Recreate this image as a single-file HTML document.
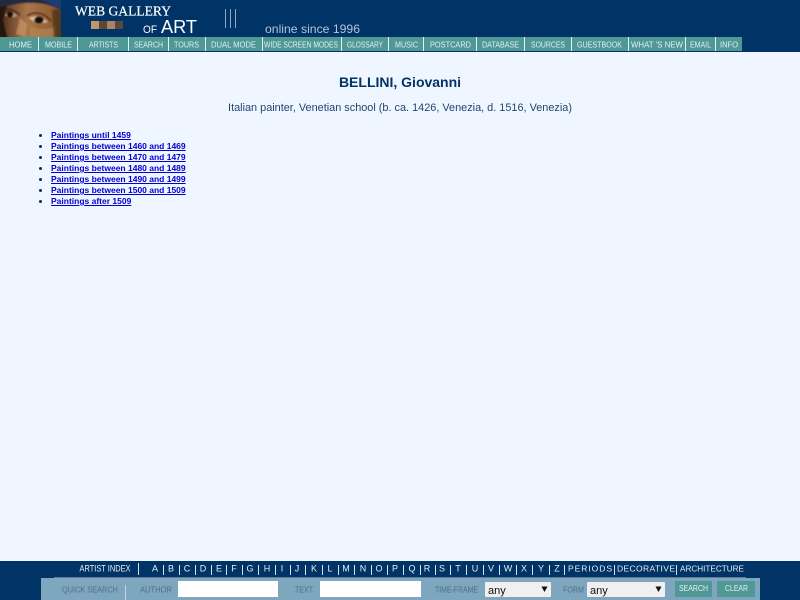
<!DOCTYPE html>
<html><head><meta charset="utf-8"><title>BELLINI, Giovanni</title>
<style>
html,body{margin:0;padding:0;width:800px;height:600px;overflow:hidden;background:#f0f6ff;font-family:"Liberation Sans",sans-serif}
svg{position:absolute;left:0;display:block}
h1{position:absolute;left:0;width:800px;top:73px;margin:0;text-align:center;font-size:14px;line-height:18px;font-weight:bold;color:#003366}
p{position:absolute;left:0;width:800px;top:101px;margin:0;text-align:center;font-size:10.9px;line-height:15px;color:#1f4670}
ul{position:absolute;left:0;top:130px;margin:0;padding:0 0 0 51px;font-size:8.5px;line-height:11px;font-weight:bold;color:#003366}
a{color:#0000d0;text-decoration:underline}
</style></head><body>
<svg style="top:0" width="800" height="52" viewBox="0 0 800 52" font-family="Liberation Sans, sans-serif">
<defs>
<linearGradient id="f" x1="0" x2="1"><stop offset="0" stop-color="#2e1b11"/><stop offset=".18" stop-color="#6f452a"/><stop offset=".45" stop-color="#a87649"/><stop offset=".8" stop-color="#935f34"/><stop offset="1" stop-color="#5c3a1e"/></linearGradient>
<filter id="b" x="0" y="0" width="100%" height="100%"><feGaussianBlur stdDeviation="0.8"/></filter>
<clipPath id="c"><rect width="61" height="37"/></clipPath>
</defs>
<rect width="800" height="52" fill="#003366"/>
<g clip-path="url(#c)"><g filter="url(#b)">
<rect x="-3" y="-3" width="67" height="43" fill="url(#f)"/>
<path d="M-3-3H64V12C54 5 40 2 26 3 14 4 6 6-3 9Z" fill="#222a40"/>
<path d="M42 0L64 11V-3H38Z" fill="#1c3a6e"/>
<path d="M-3 7L7 6 3 20 8 40H-3Z" fill="#24150e"/>
<path d="M5 15C8 11 13 11 17 16 13 18 8 18 5 15Z" fill="#b89a78"/>
<circle cx="10" cy="14.500" r="3.200" fill="#160c08"/>
<path d="M3 11C7 8 14 9 20 15" stroke="#3a2214" stroke-width="1.500" fill="none"/>
<path d="M29 18C34 15 42 16 48 22 41 24 34 23 29 18Z" fill="#d4bc9c"/>
<ellipse cx="39" cy="20" rx="4.800" ry="3.600" fill="#170d09"/>
<path d="M27 16C34 11 44 12 51 21" stroke="#46281a" stroke-width="1.500" fill="none"/>
<path d="M20 18L16 34 25 37 27 24Z" fill="#c8986c" opacity=".7"/>
<path d="M30 26C38 30 48 30 56 26V40H30Z" fill="#b98a5a" opacity=".6"/>
<path d="M52 10H64V40H54Z" fill="#4c301a" opacity=".7"/>
</g></g>
<g fill="#fff">
<text x="75" y="15.500" font-family="Liberation Serif, serif" font-size="13.500" stroke="#fff" stroke-width=".2" textLength="96" lengthAdjust="spacingAndGlyphs">WEB GALLERY</text>
<text x="143" y="33" font-size="11" textLength="14" lengthAdjust="spacingAndGlyphs">OF</text>
<text x="161" y="33" font-size="18.500" textLength="36" lengthAdjust="spacingAndGlyphs">ART</text>
</g>
<rect x="91" y="21" width="8" height="8" fill="#c49468"/><rect x="99" y="21" width="8" height="8" fill="#5c4638"/><rect x="107" y="21" width="8" height="8" fill="#a88468"/><rect x="115" y="21" width="8" height="8" fill="#5c4638"/>
<g fill="#8fa8c4"><rect x="225" y="9" width="1" height="19"/><rect x="230" y="9" width="1" height="19"/><rect x="235" y="9" width="1" height="19"/></g>
<text x="265" y="33" font-size="12" fill="#b4c6d8" textLength="95" lengthAdjust="spacingAndGlyphs">online since 1996</text>
<rect y="37" width="742" height="14" fill="#4f9896"/>
<g fill="#e4f2f2"><rect x="38" y="37" width="1" height="14"/><rect x="77" y="37" width="1" height="14"/><rect x="128" y="37" width="1" height="14"/><rect x="168" y="37" width="1" height="14"/><rect x="205" y="37" width="1" height="14"/><rect x="262" y="37" width="1" height="14"/><rect x="341" y="37" width="1" height="14"/><rect x="388" y="37" width="1" height="14"/><rect x="423" y="37" width="1" height="14"/><rect x="476" y="37" width="1" height="14"/><rect x="524" y="37" width="1" height="14"/><rect x="571" y="37" width="1" height="14"/><rect x="628" y="37" width="1" height="14"/><rect x="685" y="37" width="1" height="14"/><rect x="715" y="37" width="1" height="14"/></g>
<g fill="#e4f1f1" font-size="8">
<text x="9" y="47.300" textLength="23" lengthAdjust="spacingAndGlyphs">HOME</text>
<text x="45" y="47.300" textLength="27" lengthAdjust="spacingAndGlyphs">MOBILE</text>
<text x="89" y="47.300" textLength="29" lengthAdjust="spacingAndGlyphs">ARTISTS</text>
<text x="134" y="47.300" textLength="29" lengthAdjust="spacingAndGlyphs">SEARCH</text>
<text x="174" y="47.300" textLength="25" lengthAdjust="spacingAndGlyphs">TOURS</text>
<text x="211" y="47.300" textLength="45" lengthAdjust="spacingAndGlyphs">DUAL MODE</text>
<text x="264" y="47.300" textLength="74" lengthAdjust="spacingAndGlyphs">WIDE SCREEN MODES</text>
<text x="347" y="47.300" textLength="36" lengthAdjust="spacingAndGlyphs">GLOSSARY</text>
<text x="395" y="47.300" textLength="23" lengthAdjust="spacingAndGlyphs">MUSIC</text>
<text x="430" y="47.300" textLength="41" lengthAdjust="spacingAndGlyphs">POSTCARD</text>
<text x="482" y="47.300" textLength="37" lengthAdjust="spacingAndGlyphs">DATABASE</text>
<text x="531" y="47.300" textLength="34" lengthAdjust="spacingAndGlyphs">SOURCES</text>
<text x="577" y="47.300" textLength="45" lengthAdjust="spacingAndGlyphs">GUESTBOOK</text>
<text x="631" y="47.300" textLength="52" lengthAdjust="spacingAndGlyphs">WHAT 'S NEW</text>
<text x="690" y="47.300" textLength="21" lengthAdjust="spacingAndGlyphs">EMAIL</text>
<text x="720" y="47.300" textLength="18" lengthAdjust="spacingAndGlyphs">INFO</text>
</g>
</svg>
<h1>BELLINI, Giovanni</h1>
<p>Italian painter, Venetian school (b. ca. 1426, Venezia, d. 1516, Venezia)</p>
<ul>
<li><a href="#">Paintings until 1459</a></li>
<li><a href="#">Paintings between 1460 and 1469</a></li>
<li><a href="#">Paintings between 1470 and 1479</a></li>
<li><a href="#">Paintings between 1480 and 1489</a></li>
<li><a href="#">Paintings between 1490 and 1499</a></li>
<li><a href="#">Paintings between 1500 and 1509</a></li>
<li><a href="#">Paintings after 1509</a></li>
</ul>
<svg style="top:561px" width="800" height="39" viewBox="0 561 800 39" font-family="Liberation Sans, sans-serif">
<rect y="561" width="800" height="39" fill="#003366"/>
<rect x="54" y="577" width="692" height="1" fill="#5c7c98"/>
<rect x="41" y="578" width="719" height="22" fill="#7fa6bf"/>
<g fill="#e8eef4" font-size="9" text-anchor="middle">
<text x="105" y="571.500" textLength="51" lengthAdjust="spacingAndGlyphs">ARTIST INDEX</text>
<text x="155" y="571.500">A</text><text x="171" y="571.500">B</text><text x="187" y="571.500">C</text><text x="203" y="571.500">D</text><text x="219" y="571.500">E</text><text x="234" y="571.500">F</text><text x="250" y="571.500">G</text><text x="267" y="571.500">H</text><text x="282" y="571.500">I</text><text x="297" y="571.500">J</text><text x="314" y="571.500">K</text><text x="330" y="571.500">L</text><text x="346" y="571.500">M</text><text x="363" y="571.500">N</text><text x="379" y="571.500">O</text><text x="395" y="571.500">P</text><text x="412" y="571.500">Q</text><text x="427" y="571.500">R</text><text x="442" y="571.500">S</text><text x="458" y="571.500">T</text><text x="475" y="571.500">U</text><text x="491" y="571.500">V</text><text x="508" y="571.500">W</text><text x="524" y="571.500">X</text><text x="541" y="571.500">Y</text><text x="557" y="571.500">Z</text>
</g>
<g fill="#e8eef4" font-size="8.500">
<text x="568" y="571.500" textLength="44">PERIODS</text>
<text x="617" y="571.500" textLength="58">DECORATIVE</text>
<text x="680" y="571.500" textLength="64" lengthAdjust="spacingAndGlyphs">ARCHITECTURE</text>
</g>
<g fill="#d4e0ea"><rect x="138" y="563" width="1" height="12"/><rect x="163" y="565" width="1" height="10"/><rect x="179" y="565" width="1" height="10"/><rect x="195" y="565" width="1" height="10"/><rect x="211" y="565" width="1" height="10"/><rect x="226" y="565" width="1" height="10"/><rect x="242" y="565" width="1" height="10"/><rect x="258" y="565" width="1" height="10"/><rect x="275" y="565" width="1" height="10"/><rect x="290" y="565" width="1" height="10"/><rect x="305" y="565" width="1" height="10"/><rect x="322" y="565" width="1" height="10"/><rect x="338" y="565" width="1" height="10"/><rect x="354" y="565" width="1" height="10"/><rect x="371" y="565" width="1" height="10"/><rect x="387" y="565" width="1" height="10"/><rect x="403" y="565" width="1" height="10"/><rect x="420" y="565" width="1" height="10"/><rect x="435" y="565" width="1" height="10"/><rect x="450" y="565" width="1" height="10"/><rect x="466" y="565" width="1" height="10"/><rect x="483" y="565" width="1" height="10"/><rect x="499" y="565" width="1" height="10"/><rect x="516" y="565" width="1" height="10"/><rect x="532" y="565" width="1" height="10"/><rect x="549" y="565" width="1" height="10"/><rect x="564" y="565" width="1" height="10"/><rect x="614" y="565" width="1" height="10"/><rect x="676" y="565" width="1" height="10"/></g>
<rect x="125" y="585" width="1" height="15" fill="#c4d6e2"/>
<g fill="#567893" font-size="8.500" stroke="#567893" stroke-width=".15">
<text x="62" y="592.500" textLength="56" lengthAdjust="spacingAndGlyphs">QUICK SEARCH</text>
<text x="140" y="592.500" textLength="32" lengthAdjust="spacingAndGlyphs">AUTHOR</text>
<text x="295" y="592.500" textLength="18" lengthAdjust="spacingAndGlyphs">TEXT</text>
<text x="435" y="592.500" textLength="43" lengthAdjust="spacingAndGlyphs">TIME-FRAME</text>
<text x="563" y="592.500" textLength="21" lengthAdjust="spacingAndGlyphs">FORM</text>
</g>
<rect x="178" y="581" width="100" height="16" fill="#fff"/>
<rect x="320" y="581" width="101" height="16" fill="#fff"/>
<rect x="485" y="582" width="66" height="15" rx="1" fill="#f0f0f0"/>
<rect x="587" y="582" width="78" height="15" rx="1" fill="#f0f0f0"/>
<g fill="#111" font-size="11"><text x="488" y="594">any</text><text x="590" y="594">any</text></g>
<path d="M541.500 586.500h6l-3 5.500zM655.500 586.500h6l-3 5.500z" fill="#111"/>
<rect x="675" y="581" width="37" height="16" fill="#4f9896"/>
<rect x="717" y="581" width="38" height="16" fill="#4f9896"/>
<g fill="#e4f1f1" font-size="8"><text x="679" y="591" textLength="29" lengthAdjust="spacingAndGlyphs">SEARCH</text><text x="725" y="591" textLength="23" lengthAdjust="spacingAndGlyphs">CLEAR</text></g>
</svg>
</body></html>
